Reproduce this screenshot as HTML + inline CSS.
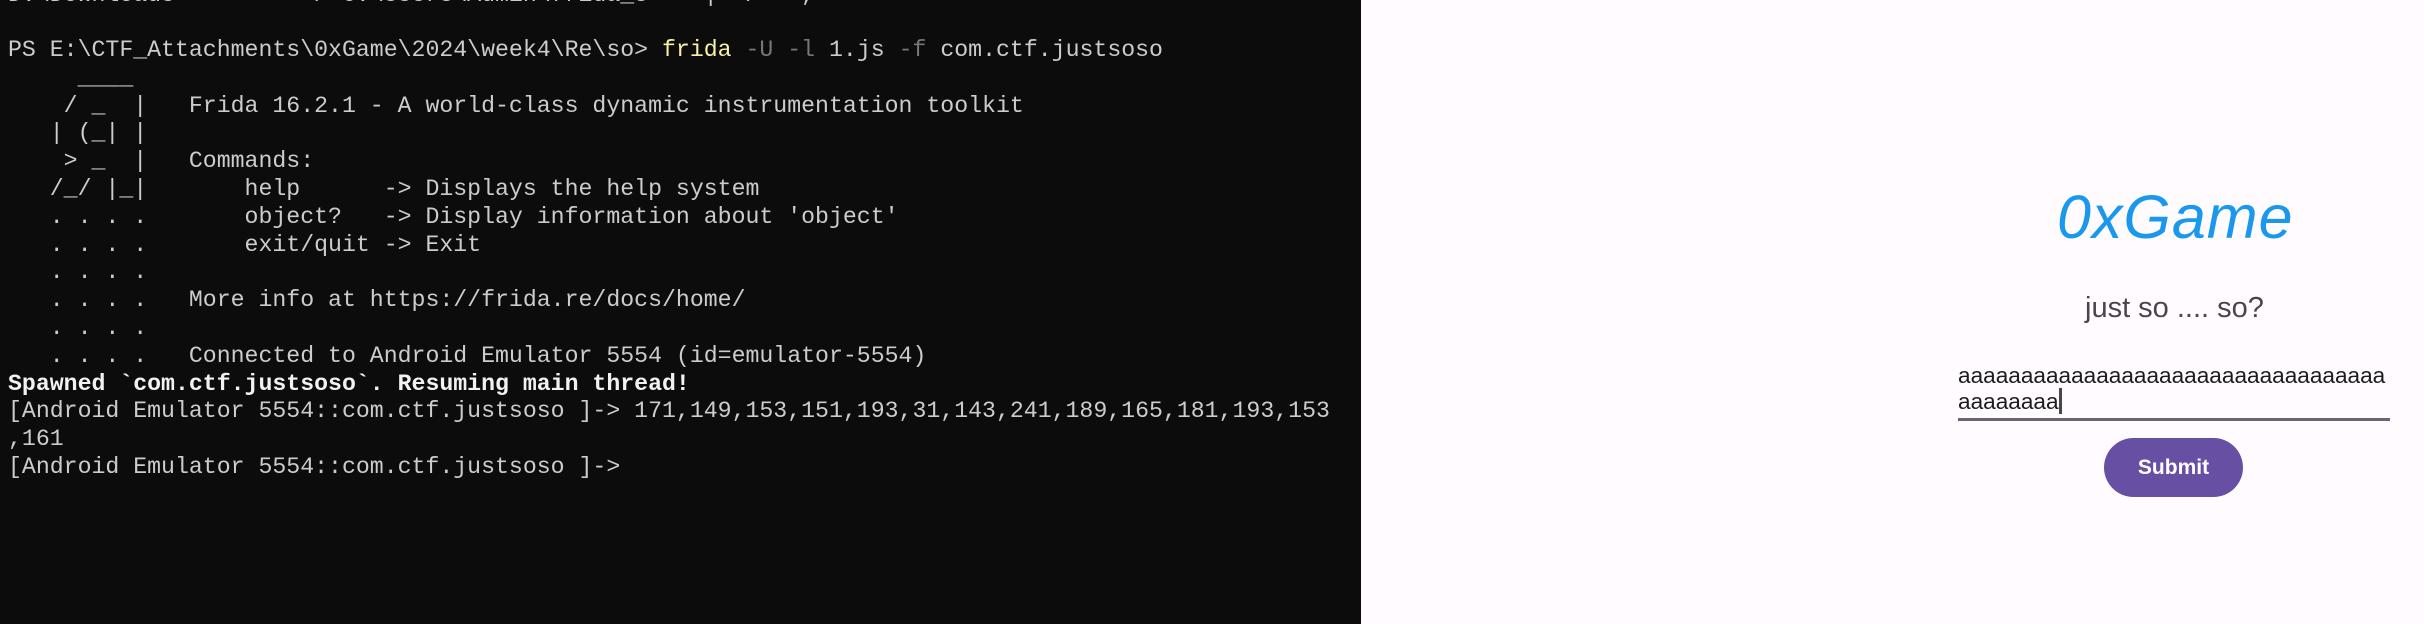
<!DOCTYPE html>
<html><head><meta charset="utf-8"><style>
html,body{margin:0;padding:0;width:2424px;height:624px;overflow:hidden;background:#fffbfe;font-family:"Liberation Sans",sans-serif}
#term{position:absolute;left:0;top:0;width:1361px;height:624px;background:#0c0c0c;overflow:hidden}
pre{position:absolute;left:8px;top:-18.5px;margin:0;font-family:"Liberation Mono","DejaVu Sans Mono",monospace;font-size:23.2px;line-height:27.8px;color:#cccccc;white-space:pre}
.y{color:#f9f1a5}.g{color:#767676}.b{color:#f2f2f2;font-weight:bold}
#app{position:absolute;left:1361px;top:0;width:1063px;height:624px;background:#fffbfe}
.title{position:absolute;left:2057px;top:182px;font-size:61px;font-style:italic;color:#1a98ee;letter-spacing:1px;font-family:"Liberation Sans",sans-serif}
.sub{position:absolute;left:2085px;top:292px;font-size:29px;color:#49454f;font-family:"Liberation Sans",sans-serif}
.inp{position:absolute;left:1958px;top:363px;font-size:22.6px;line-height:25px;color:#1c1b1f;white-space:pre;font-family:"Liberation Sans",sans-serif}
.caret{display:inline-block;width:3px;height:26px;background:#49454f;vertical-align:-5px}
.line{position:absolute;left:1958px;top:418px;width:432px;height:3px;background:#6b6478}
.btn{position:absolute;left:2104px;top:438px;width:139px;height:59px;border-radius:30px;background:#6750a4;color:#fff;font-weight:bold;font-size:21px;text-align:center;line-height:59px;font-family:"Liberation Sans",sans-serif}
</style></head><body>
<div id="term"><pre>D:\Downloads          / C:\Users\Admin\frida_s    |  /   ,

PS E:\CTF_Attachments\0xGame\2024\week4\Re\so&gt; <span class="y">frida</span> <span class="g">-U -l</span> 1.js <span class="g">-f</span> com.ctf.justsoso
     ____
    / _  |   Frida 16.2.1 - A world-class dynamic instrumentation toolkit
   | (_| |
    &gt; _  |   Commands:
   /_/ |_|       help      -&gt; Displays the help system
   . . . .       object?   -&gt; Display information about 'object'
   . . . .       exit/quit -&gt; Exit
   . . . .
   . . . .   More info at https://frida.re/docs/home/
   . . . .
   . . . .   Connected to Android Emulator 5554 (id=emulator-5554)
<span class="b">Spawned `com.ctf.justsoso`. Resuming main thread!</span>
[Android Emulator 5554::com.ctf.justsoso ]-&gt; 171,149,153,151,193,31,143,241,189,165,181,193,153
,161
[Android Emulator 5554::com.ctf.justsoso ]-&gt;</pre></div>
<div id="app"></div>
<div class="title">0xGame</div>
<div class="sub">just so .... so?</div>
<div class="inp">aaaaaaaaaaaaaaaaaaaaaaaaaaaaaaaaaa
aaaaaaaa<span class="caret"></span></div>
<div class="line"></div>
<div class="btn">Submit</div>
</body></html>
